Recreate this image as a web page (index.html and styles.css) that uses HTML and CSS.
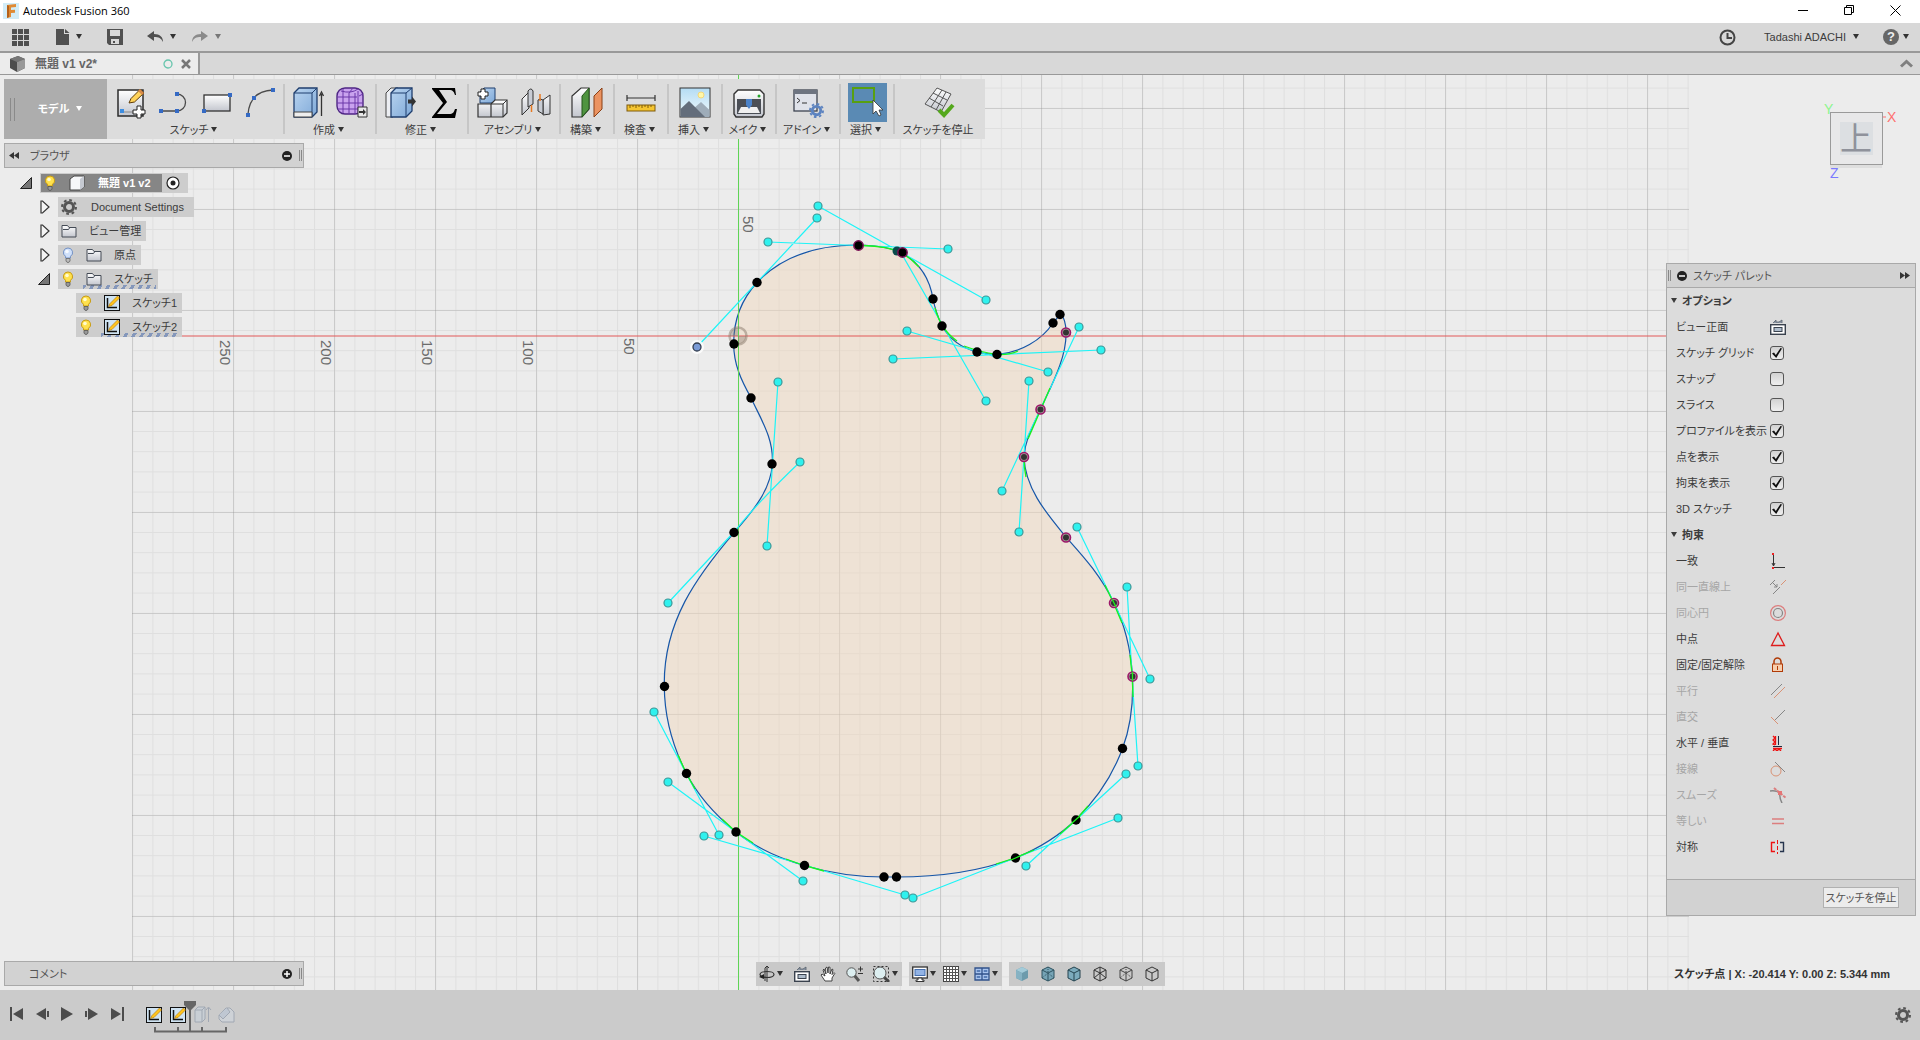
FILE: index.html
```html
<!DOCTYPE html>
<html lang="ja">
<head>
<meta charset="utf-8">
<title>Autodesk Fusion 360</title>
<link rel="stylesheet" href="styles.css">
</head>
<body>
<svg class="defs" width="0" height="0" aria-hidden="true">
  <defs>
    <linearGradient id="gl" x1="0" y1="0" x2="0" y2="1"><stop offset="0" stop-color="#fff"/><stop offset="1" stop-color="#c3c6ce"/></linearGradient>
    <linearGradient id="gb" x1="0" y1="0" x2="1" y2="1"><stop offset="0" stop-color="#b9d4f0"/><stop offset="1" stop-color="#7fa9d8"/></linearGradient>
    <linearGradient id="sky" x1="0" y1="0" x2="0" y2="1"><stop offset="0" stop-color="#b4dcf4"/><stop offset="1" stop-color="#f2fafd"/></linearGradient>
    <symbol id="caret" viewBox="0 0 8 6"><path d="M1 0h6L4 5z" fill="currentColor"/></symbol>
    <symbol id="bulb-on" viewBox="0 0 12 16"><path d="M6 1a4.500 4.500 0 0 0-2.500 8.300V11h5V9.300A4.500 4.500 0 0 0 6 1z" fill="#ffe14d" stroke="#c79a13"/><circle cx="5" cy="4.500" r="1.800" fill="#fffbd0"/><path d="M4 11.500h4V14l-1 1.300H5L4 14z" fill="#999" stroke="#555" stroke-width=".8"/></symbol>
    <symbol id="bulb-off" viewBox="0 0 12 16"><path d="M6 1a4.500 4.500 0 0 0-2.500 8.300V11h5V9.300A4.500 4.500 0 0 0 6 1z" fill="#cfe0fa" stroke="#7391c4"/><circle cx="5" cy="4.500" r="1.800" fill="#f5f9ff"/><path d="M4 11.500h4V14l-1 1.300H5L4 14z" fill="#bbb" stroke="#666" stroke-width=".8"/></symbol>
    <symbol id="folder" viewBox="0 0 16 14"><path d="M1 13V1.500h5.500L8 3.500h7V13z" fill="url(#gl)" stroke="#444b55"/><path d="M2 5.500h5.500l1-1.500" fill="none" stroke="#444b55"/></symbol>
    <symbol id="sketch" viewBox="0 0 16 16"><rect x=".5" y=".5" width="15" height="15" fill="#cfe3f2" stroke="#111"/><path d="M3.500 3v9.500H13" fill="none" stroke="#111" stroke-width="1.500"/><path d="M4.500 11.500L6 8.500 13.500 1l2 2L8 10.500z" fill="#ffc41d" stroke="#b0740a" stroke-width=".6"/></symbol>
    <symbol id="closed" viewBox="0 0 10 14"><path d="M1 1h1.500L9 7l-6.500 6H1z" fill="#f4f4f4" stroke="#333" stroke-width="1.200"/></symbol>
    <symbol id="open" viewBox="0 0 12 12"><path d="M11.500.5v11H.5z" fill="#777" stroke="#222"/></symbol>
    <symbol id="gear" viewBox="0 0 16 16"><circle cx="8" cy="8" r="4.500" fill="none" stroke="currentColor" stroke-width="3"/><circle cx="8" cy="8" r="7" fill="none" stroke="currentColor" stroke-width="2" stroke-dasharray="2.750 2.750"/></symbol>
    <symbol id="front" viewBox="0 0 16 16"><rect x=".7" y="5.700" width="14.600" height="9.600" fill="#fff" stroke="#3a424e" stroke-width="1.400"/><rect x="4" y="8.500" width="8" height="4" fill="#aebccb" stroke="#3a424e"/><path d="M3 4l3-3v2h3l3-2v3" fill="#8b95a3" stroke="#59636f" stroke-width=".8"/></symbol>
    <symbol id="cube-box" viewBox="0 0 14 16"><path d="M7 1l6 3v8l-6 3-6-3V4z"/><path d="M1 4l6 3 6-3M7 7v8" fill="none"/></symbol>
    <pattern id="minor" x="31.200" y="12.600" width="20.200" height="20.200" patternUnits="userSpaceOnUse"><path d="M.5 0v20.200M0 .5h20.200" stroke="#000" stroke-opacity=".055"/></pattern>
    <pattern id="major" x="31" y="33" width="101" height="101" patternUnits="userSpaceOnUse"><path d="M.5 0v101M0 .5h101" stroke="#000" stroke-opacity=".1"/></pattern>
  </defs>
</svg>

<header class="titlebar">
  <svg width="16" height="16" viewBox="0 0 16 16"><rect width="16" height="16" fill="#d2ecf7"/><path d="M4 2l9-1v3l-5 .5V7l4-.3v3l-4 .3v4l-4 1z" fill="#e08a34"/><path d="M4 2l2 1v11l-2 1z" fill="#b5611a"/></svg>
  <h1>Autodesk Fusion 360</h1>
  <div class="window-controls">
    <button aria-label="最小化"><svg width="11" height="11"><path d="M0 5.500h10" stroke="#000"/></svg></button>
    <button aria-label="元に戻す"><svg width="11" height="11"><path d="M.5 2.500h7v7h-7zM2.500 2.500v-2h7v7h-2" fill="none" stroke="#000"/></svg></button>
    <button aria-label="閉じる"><svg width="11" height="11"><path d="M.5.5l10 10M10.500.5l-10 10" stroke="#000"/></svg></button>
  </div>
</header>

<div class="quickbar">
  <button class="q-grid" aria-label="データパネル"><svg width="17" height="17"><path d="M0 0h5v5H0zM6 0h5v5H6zM12 0h5v5h-5zM0 6h5v5H0zM6 6h5v5H6zM12 6h5v5h-5zM0 12h5v5H0zM6 12h5v5H6zM12 12h5v5h-5z" fill="#505050"/></svg></button>
  <button class="q-file" aria-label="ファイル"><svg width="14" height="16"><path d="M0 0h8v5h5v11H0z" fill="#505050"/><path d="M9 0l4.500 4H9z" fill="#505050"/></svg><svg class="caret" width="8" height="6"><use href="#caret"/></svg></button>
  <button class="q-save" aria-label="保存"><svg width="17" height="17"><path d="M0 0h16v16H2l-2-2z" fill="#505050"/><path d="M3 1h10v6H3zM4 10h8v5H4z" fill="#d8d8d8"/><path d="M6 12h2v2H6z" fill="#505050"/></svg></button>
  <button class="q-undo" aria-label="元に戻す"><svg width="17" height="12"><path d="M0 5l7-5v3c6 0 9 3 9 8-2-4-4-5-9-5v4z" fill="#505050"/></svg><svg class="caret" width="8" height="6"><use href="#caret"/></svg></button>
  <button class="q-redo" aria-label="やり直し"><svg width="17" height="12"><path d="M16 5L9 0v3C3 3 0 6 0 11c2-4 4-5 9-5v4z" fill="#8a8a8a"/></svg><svg class="caret" width="8" height="6"><use href="#caret"/></svg></button>
  <div class="account">
    <button aria-label="ジョブステータス"><svg width="17" height="17"><circle cx="8.500" cy="8.500" r="7" fill="none" stroke="#444" stroke-width="2"/><path d="M8.500 4v5H13" fill="none" stroke="#444" stroke-width="2"/></svg></button>
    <button class="user">Tadashi ADACHI<svg class="caret" width="8" height="6"><use href="#caret"/></svg></button>
    <button class="help" aria-label="ヘルプ"><span class="help-mark">?</span><svg class="caret" width="8" height="6"><use href="#caret"/></svg></button>
  </div>
</div>

<div class="tabs">
  <div class="tab">
    <svg width="18" height="18"><path d="M1 4l8-3 7 3v9l-8 4-7-4z" fill="#4d4d4d"/><path d="M1 4l8-3 7 3-8 3z" fill="#777"/><path d="M8 7l8-3v9l-8 4z" fill="#999"/></svg>
    <span class="tab-name">無題 v1 v2*</span>
    <svg width="10" height="10"><circle cx="5" cy="5" r="4" fill="none" stroke="#67c5ad" stroke-width="1.300"/></svg>
    <button aria-label="タブを閉じる"><svg width="10" height="10"><path d="M1 1l8 8M9 1L1 9" stroke="#777" stroke-width="2.500"/></svg></button>
  </div>
  <button class="collapse" aria-label="折りたたむ"><svg width="13" height="9"><path d="M1 7.500l5.500-5 5.500 5" fill="none" stroke="#808080" stroke-width="3"/></svg></button>
</div>

<main class="stage">
  <svg class="scene" aria-label="スケッチ">
    <rect x="132" y="0" width="1557" height="100%" fill="url(#minor)"/>
    <rect x="132" y="0" width="1557" height="100%" fill="url(#major)"/>
    <g transform="translate(0 -75)">
      <path class="profile" d="M858 245C874 245.500 890 247 902 253C920 263 930 280 933 299C935 309 938 317 942 326C950 340 962 348 977 352C983 353.500 990 354.500 997 354.500C1020 353 1042 340 1053 323L1060 314.500C1064 316 1066 324 1066 332C1067 358 1050 388 1040.700 409C1032 428 1025 440 1024 457C1025 489 1048 515 1066 537C1082 555 1100 574 1114 603C1126 627 1131 652 1132.500 676.500C1133.500 702 1131 726 1122.500 748.500C1112 777 1097 799 1075.700 819.700C1058 837 1037 849 1015.400 858C978 872 937 877 896.400 877H884C857 877 830 873 804.300 865.500C778 858 756 848 735.700 831.700C714 814 698 796 686.400 773.300C672 745 664.500 716 664.300 686.700C663 622 697 576 734.300 532.300C754 510 771 489 772.300 464C774 438 760 418 751 397.700C741 380 733.700 364 733.700 344C733.500 321 741 300 757 282.500C782 256 818 245 858 245Z"/>
      <path class="axis-x" d="M132 336H1689"/>
      <path class="axis-y" d="M738.500 75V3000"/>
      <g fill="none" stroke="#8a7a6c" stroke-opacity=".5"><circle cx="738" cy="336" r="8.500" stroke-width="2.500"/><path d="M738 336h-8a8 8 0 0 1 8-8zM738 336h8a8 8 0 0 1-8 8z" fill="#8a7a6c" fill-opacity=".4" stroke="none"/></g>
      <path class="handle" d="M818 206L986 300M817 218L697 347M768 242L948 249M900 251L986 401M907 331L1048 372M893 359L1101 350M778 382L767 546M800 462Q758 502 734 532L668 603M1029 381L1019 532M1079 327L1002 491M1077 527L1114 603L1150 679M1127 587L1132 676L1138 766M1126 774L1026 866M1118 818L1015 858L913 898M905 895L804 865L704 836M668 782L736 832L803 881M654 712L686 773L719 835"/>
      <path class="curvature" d="M863 245.500Q888 246 902 253Q912 259 919 267M935 308Q941 330 957 341M964 346Q980 352 997 354.500Q1010 355 1018 351M1050 388L1041 409L1028 439M1024 457Q1024 468 1026 477M1105 585Q1114 603 1122 623M1130 655Q1133 676 1133 697M1088 806L1076 820L1060 834M1034 850L1015 858L996 864M824 871L804 865.500L786 859M753 843L736 832L722 819M695 789L686 773L678 755"/>
      <g class="grip"><circle cx="818" cy="206" r="4"/><circle cx="817" cy="218" r="4"/><circle cx="768" cy="242" r="4"/><circle cx="948" cy="249" r="4"/><circle cx="986" cy="300" r="4"/><circle cx="986" cy="401" r="4"/><circle cx="907" cy="331" r="4"/><circle cx="1048" cy="372" r="4"/><circle cx="893" cy="359" r="4"/><circle cx="1101" cy="350" r="4"/><circle cx="778" cy="382" r="4"/><circle cx="767" cy="546" r="4"/><circle cx="800" cy="462" r="4"/><circle cx="668" cy="603" r="4"/><circle cx="1029" cy="381" r="4"/><circle cx="1019" cy="532" r="4"/><circle cx="1079" cy="327" r="4"/><circle cx="1002" cy="491" r="4"/><circle cx="1077" cy="527" r="4"/><circle cx="1150" cy="679" r="4"/><circle cx="1127" cy="587" r="4"/><circle cx="1138" cy="766" r="4"/><circle cx="1126" cy="774" r="4"/><circle cx="1026" cy="866" r="4"/><circle cx="1118" cy="818" r="4"/><circle cx="913" cy="898" r="4"/><circle cx="905" cy="895" r="4"/><circle cx="704" cy="836" r="4"/><circle cx="668" cy="782" r="4"/><circle cx="803" cy="881" r="4"/><circle cx="654" cy="712" r="4"/><circle cx="719" cy="835" r="4"/></g>
      <circle cx="697" cy="347" r="7" fill="#fff" fill-opacity=".8"/><circle cx="697" cy="347" r="4" fill="#7b9bd6" stroke="#333e50" stroke-width="1.300"/>
      <circle cx="897" cy="251" r="4.500" fill="#0a4a4c"/>
      <g fill="#000"><circle cx="757" cy="282.500" r="4.700"/><circle cx="734" cy="344" r="4.700"/><circle cx="751" cy="398" r="4.700"/><circle cx="772" cy="464" r="4.700"/><circle cx="734" cy="532.500" r="4.700"/><circle cx="933" cy="299" r="4.700"/><circle cx="942" cy="326" r="4.700"/><circle cx="977" cy="352" r="4.700"/><circle cx="997" cy="354.500" r="4.700"/><circle cx="1053" cy="323" r="4.700"/><circle cx="1060" cy="314.500" r="4.700"/><circle cx="1122.500" cy="748.500" r="4.700"/><circle cx="1076" cy="820" r="4.700"/><circle cx="1015.500" cy="858" r="4.700"/><circle cx="896.500" cy="877" r="4.700"/><circle cx="884" cy="877" r="4.700"/><circle cx="804.500" cy="865.500" r="4.700"/><circle cx="736" cy="832" r="4.700"/><circle cx="686.500" cy="773.500" r="4.700"/><circle cx="664.500" cy="686.500" r="4.700"/></g>
      <g fill="#000" stroke="#7d1457" stroke-width="1.500"><circle cx="858.500" cy="245.500" r="4.700"/><circle cx="902.500" cy="252.500" r="4.700"/></g>
      <g class="ring"><circle cx="1066" cy="332.500" r="4.500"/><circle cx="1040.500" cy="409.500" r="4.500"/><circle cx="1024" cy="457" r="4.500"/><circle cx="1066" cy="537.500" r="4.500"/><circle cx="1114" cy="603" r="4.500"/><circle cx="1132.500" cy="676.500" r="4.500"/></g>
      <g fill="#333"><circle cx="1066" cy="332.500" r="3"/><circle cx="1040.500" cy="409.500" r="3"/><circle cx="1024" cy="457" r="3"/><circle cx="1066" cy="537.500" r="3"/><circle cx="1114" cy="603" r="3"/><circle cx="1132.500" cy="676.500" r="3"/></g>
      <path class="curvature" d="M1112 599L1116 607M1132.500 672V681M1072 823L1080 816M1011 860L1020 856"/>
      <g class="ruler"><text transform="translate(220 340) rotate(90)">250</text><text transform="translate(321 340) rotate(90)">200</text><text transform="translate(422 340) rotate(90)">150</text><text transform="translate(523 340) rotate(90)">100</text><text transform="translate(624 338) rotate(90)">50</text><text transform="translate(743 216) rotate(90)">50</text></g>
    </g>
  </svg>

  <div class="upper">
    <div class="left-dock">
      <nav class="toolbar">
        <button class="mode"><span class="grip-bars"></span><span>モデル</span><svg class="caret" width="8" height="6"><use href="#caret"/></svg></button>
        <section class="group g-sketch">
          <div class="icons">
            <svg width="32" height="32"><rect x="3" y="3" width="25" height="26" fill="url(#gl)" stroke="#2b2b2b" stroke-width="1.500"/><path d="M6 25h14" stroke="#888"/><rect x="5" y="22" width="4" height="4" fill="#3d8de0"/><path d="M14 16l2-4.500 9-9 4 3.500-9.500 9z" fill="#ffd35a" stroke="#5c3a0a"/><path d="M23 4l2-2 4 4-2 2z" fill="#d88a4a"/><path d="M22 19h4v4h4v4h-4v4h-4v-4h-4v-4h4z" fill="#fff" stroke="#222"/></svg>
            <svg width="32" height="32"><path d="M3 24h16a8.500 8.500 0 0 0 0-17" fill="none" stroke="#4a4a4a" stroke-width="1.300"/><path d="M1 22h4v4H1zM17 22h4v4h-4zM17 5h4v4h-4z" fill="#356ac4"/></svg>
            <svg width="32" height="32"><rect x="3" y="8" width="26" height="16" fill="url(#gl)" stroke="#333" stroke-width="1.300"/><path d="M1 22h4v4H1zM27 6h4v4h-4z" fill="#356ac4"/></svg>
            <svg width="32" height="32"><path d="M4 27Q6 4 29 3" fill="none" stroke="#4a4a4a" stroke-width="1.300"/><path d="M2 26h4v4H2zM8 9h4v4H8zM27 1h4v4h-4z" fill="#356ac4"/></svg>
          </div>
          <button>スケッチ<svg class="caret" width="8" height="6"><use href="#caret"/></svg></button>
        </section>
        <section class="group">
          <div class="icons">
            <svg width="32" height="32"><path d="M1 6l5-5h18v24l-5 5H1z" fill="url(#gb)" stroke="#1f3e6e" stroke-width="1.300"/><path d="M1 6h18v24M19 6l5-5" fill="none" stroke="#1f3e6e"/><path d="M1 25h18v5H1z" fill="#eee" stroke="#444"/><path d="M28.500 29V7M26.500 9l2-4 2 4" fill="none" stroke="#333" stroke-width="1.300"/></svg>
            <svg width="32" height="32"><rect x="1" y="1" width="26" height="26" rx="8" fill="#c9a2ee" stroke="#4d2583" stroke-width="1.400"/><path d="M7 2v24M13 6v21M19 6v21M1 10h20M1 16h26M2 22h24M5 4q10 3 17-2M22 4v22M13 6l4-5M23 9l4-2" fill="none" stroke="#6a37a8"/><path d="M22 20h9v10h-9z" fill="#e8e8e8" stroke="#333"/><path d="M23 24h4v-2l3 3-3 3v-2h-4z" fill="#333"/></svg>
          </div>
          <button>作成<svg class="caret" width="8" height="6"><use href="#caret"/></svg></button>
        </section>
        <section class="group">
          <div class="icons">
            <svg width="32" height="32"><path d="M1 6l5-5h7v24l-5 5H1z" fill="#eceef2" stroke="#444"/><path d="M6 6l5-5h16v23l-6 6H6z" fill="url(#gb)" stroke="#1f3e6e" stroke-width="1.300"/><path d="M6 6h15v24M21 6l6-5" fill="none" stroke="#1f3e6e"/><path d="M23 12.500h4v-3l4 5-4 5v-3h-4z" fill="#333"/></svg>
            <svg width="32" height="32"><path d="M4 1h23l1 7h-1c-1-3-2-5-6-5H11l8 12-10 12h12c4 0 5-2 6-5h2l-2 9H4v-1l11-14L4 2z" fill="#000"/></svg>
          </div>
          <button>修正<svg class="caret" width="8" height="6"><use href="#caret"/></svg></button>
        </section>
        <section class="group">
          <div class="icons">
            <svg width="32" height="32"><path d="M3 5l4-4h11v15H3z" fill="url(#gb)" stroke="#1f3e6e"/><path d="M1 17h13v13H1zM14 17l4-4h12v13l-4 4H14z" fill="url(#gl)" stroke="#333" stroke-width="1.200"/><path d="M14 17h12v13M26 17l4-4" fill="none" stroke="#333"/><path d="M4 2h4v3h3v4H8v3H4V9H1V5h3z" fill="#fff" stroke="#222"/></svg>
            <svg width="32" height="32"><path d="M2 12l7-7V21l-7 7zM30 8l-7 5v15l7-1z" fill="url(#gl)" stroke="#333"/><path d="M8 4q3-4 5 0v13l-5 3zM18 13q2-2 5 0v14l-5-3z" fill="#c8ccd4" stroke="#333"/><path d="M11.500 18v7M20 7v7" stroke="#e77820" stroke-width="1.500"/></svg>
          </div>
          <button>アセンブリ<svg class="caret" width="8" height="6"><use href="#caret"/></svg></button>
        </section>
        <section class="group">
          <div class="icons"><svg width="32" height="32"><path d="M1 9l9-8h8v21l-7 8H1z" fill="url(#gl)" stroke="#333" stroke-width="1.200"/><path d="M11 9l7-8v21l-7 8z" fill="#4f9440" stroke="#24551b"/><path d="M23 9l8-8v21l-8 8z" fill="#eb9361" stroke="#8a3f15"/></svg></div>
          <button>構築<svg class="caret" width="8" height="6"><use href="#caret"/></svg></button>
        </section>
        <section class="group">
          <div class="icons"><svg width="32" height="32"><path d="M2 11h28M2 8v6M30 8v6" stroke="#333" stroke-width="1.200"/><rect x="2" y="18" width="28" height="6" fill="#f5c531" stroke="#7e5a0a"/><path d="M5 18v3M8 18v2M11 18v3M14 18v2M17 18v3M20 18v2M23 18v3M26 18v2" stroke="#7e5a0a"/></svg></div>
          <button>検査<svg class="caret" width="8" height="6"><use href="#caret"/></svg></button>
        </section>
        <section class="group">
          <div class="icons"><svg width="32" height="32"><rect x="1" y="1" width="30" height="29" fill="url(#sky)" stroke="#333"/><circle cx="22" cy="8" r="3" fill="#fff7a8" stroke="#f4d77a"/><path d="M14 22l8-7 8.500 8v7H14z" fill="#9eacb9"/><path d="M1.500 22L10 14l16 16H1.500z" fill="#636d7b"/></svg></div>
          <button>挿入<svg class="caret" width="8" height="6"><use href="#caret"/></svg></button>
        </section>
        <section class="group">
          <div class="icons"><svg width="32" height="32"><path d="M1 7l4-4h22l4 4v20l-2 3H3l-2-3z" fill="url(#gl)" stroke="#333" stroke-width="1.400"/><path d="M4 12h24v15H4z" fill="#4b4f56"/><path d="M8 20h16l3 6H5z" fill="#f0f0f0"/><path d="M13 12h6v6l-3 4-3-4z" fill="#4c83c9"/><circle cx="26" cy="9" r="1.500" fill="#25a52b"/></svg></div>
          <button>メイク<svg class="caret" width="8" height="6"><use href="#caret"/></svg></button>
        </section>
        <section class="group g-addin">
          <div class="icons"><svg width="32" height="32"><rect x="2" y="3" width="23" height="21" fill="#dfe2ea" stroke="#3e4450" stroke-width="1.300"/><path d="M2 3h23v4H2z" fill="#6d7481"/><path d="M5 11l3 2.500L5 16M10 16h5" fill="none" stroke="#333"/><g transform="translate(17 16)" color="#5c83c0"><use href="#gear" width="15" height="15"/></g></svg></div>
          <button>アドイン<svg class="caret" width="8" height="6"><use href="#caret"/></svg></button>
        </section>
        <section class="group g-select">
          <div class="icons"><svg width="39" height="39" viewBox="0 0 39 39"><rect x="5" y="5" width="21" height="14" fill="none" stroke="#58a010" stroke-width="2"/><path d="M25 17v14l3-3 3 5 2-1-2-5h4z" fill="#fff" stroke="#333" stroke-width=".8"/></svg></div>
          <button>選択<svg class="caret" width="8" height="6"><use href="#caret"/></svg></button>
        </section>
        <section class="group g-stop">
          <div class="icons"><svg width="32" height="32"><path d="M14 1l14 6-10 18-16-8z" fill="url(#gl)" stroke="#555"/><path d="M10 6l14 7M6 11l14 8M19 3L8 20M23 5L13 23" stroke="#555" fill="none"/><path d="M16 23l5 5L30 18" fill="none" stroke="#54a81c" stroke-width="4"/></svg></div>
          <button>スケッチを停止</button>
        </section>
      </nav>

      <div class="bar">
        <svg width="11" height="7"><path d="M5 0v7L0 3.500zM10 0v7L5 3.500z" fill="#333"/></svg>
        <span>ブラウザ</span>
        <svg class="bar-sign" width="10" height="10"><circle cx="5" cy="5" r="5" fill="#222"/><path d="M2 5h6" stroke="#fff" stroke-width="1.500"/></svg>
        <i class="bars"></i>
      </div>
      <ul class="tree">
        <li class="lv0"><svg width="12" height="12"><use href="#open"/></svg>
          <div class="node root"><span class="active"><svg width="12" height="16"><use href="#bulb-on"/></svg><svg width="16" height="16"><path d="M1 4l4-3h10v11l-4 3H1z" fill="#f6f7f9" stroke="#444"/><path d="M11 4v11l4-3V1z" fill="#c5c9d1"/></svg><b>無題 v1 v2</b></span><svg width="14" height="14"><circle cx="7" cy="7" r="6" fill="#fff" stroke="#222" stroke-width="1.200"/><circle cx="7" cy="7" r="2.500" fill="#222"/></svg></div></li>
        <li class="lv1"><svg width="10" height="14"><use href="#closed"/></svg>
          <div class="node doc"><svg color="#555" width="16" height="16"><use href="#gear"/></svg><span>Document Settings</span></div></li>
        <li class="lv1"><svg width="10" height="14"><use href="#closed"/></svg>
          <div class="node"><svg width="16" height="14"><use href="#folder"/></svg><span>ビュー管理</span></div></li>
        <li class="lv1"><svg width="10" height="14"><use href="#closed"/></svg>
          <div class="node lamp"><svg width="12" height="16"><use href="#bulb-off"/></svg><svg width="16" height="14"><use href="#folder"/></svg><span>原点</span></div></li>
        <li class="lv1"><svg width="12" height="12"><use href="#open"/></svg>
          <div class="node lamp hatch"><svg width="12" height="16"><use href="#bulb-on"/></svg><svg width="16" height="14"><use href="#folder"/></svg><span>スケッチ</span></div></li>
        <li class="lv2"><div class="node lamp"><svg width="12" height="16"><use href="#bulb-on"/></svg><svg width="16" height="16"><use href="#sketch"/></svg><span>スケッチ1</span></div></li>
        <li class="lv2"><div class="node lamp hatch"><svg width="12" height="16"><use href="#bulb-on"/></svg><svg width="16" height="16"><use href="#sketch"/></svg><span>スケッチ2</span></div></li>
      </ul>
    </div>

    <div class="right-dock">
      <svg class="viewcube" width="90" height="85">
        <rect x="14" y="16" width="52" height="52" fill="#000" opacity=".06"/>
        <rect x="14.500" y="12.500" width="52" height="52" fill="#e8e8e9" stroke="#9a9a9a"/>
        <rect x="24" y="22" width="33" height="33" fill="#dcdfe2"/>
        <text class="cube-face" x="40" y="50">上</text>
        <text x="8" y="14" fill="#8df58d">Y</text><text x="71" y="22" fill="#ff7070">X</text><text x="14" y="78" fill="#7a7aff">Z</text>
        <path d="M67 17h3" stroke="#ff7070"/>
      </svg>

      <aside class="palette">
        <header><i class="bars"></i><svg width="10" height="10"><circle cx="5" cy="5" r="5" fill="#222"/><path d="M2 5h6" stroke="#fff" stroke-width="1.500"/></svg><span>スケッチ パレット</span><svg class="end" width="11" height="7"><path d="M0 0v7l5-3.500zM5 0v7l5-3.500z" fill="#333"/></svg></header>
        <div class="palette-body">
          <h2><svg width="8" height="6"><use href="#caret"/></svg>オプション</h2>
          <div class="row"><span>ビュー正面</span><svg width="16" height="16"><use href="#front"/></svg></div>
          <label class="row"><span>スケッチ グリッド</span><input type="checkbox" checked></label>
          <label class="row"><span>スナップ</span><input type="checkbox"></label>
          <label class="row"><span>スライス</span><input type="checkbox"></label>
          <label class="row"><span>プロファイルを表示</span><input type="checkbox" checked></label>
          <label class="row"><span>点を表示</span><input type="checkbox" checked></label>
          <label class="row"><span>拘束を表示</span><input type="checkbox" checked></label>
          <label class="row"><span>3D スケッチ</span><input type="checkbox" checked></label>
          <h2><svg width="8" height="6"><use href="#caret"/></svg>拘束</h2>
          <div class="row"><span>一致</span><svg width="16" height="16"><path d="M3.500 2v11M4 14.500h11M2 10l1.500 3L5 10" fill="none" stroke="#333"/><path d="M2 0h2v2H2zM2 14h2v2H2z" fill="#e22"/></svg></div>
          <div class="row off"><span>同一直線上</span><svg width="16" height="16"><path d="M0 6l5-5M3 15L10 8M3 4l4 4M7 5v3H4" fill="none" stroke="#333"/><path d="M11 6l5-5" stroke="#d84a10"/></svg></div>
          <div class="row off"><span>同心円</span><svg width="16" height="16"><circle cx="8" cy="8" r="7.400" fill="none" stroke="#d22" stroke-width="1.200"/><circle cx="8" cy="8" r="4.500" fill="none" stroke="#333" stroke-width="1.200"/></svg></div>
          <div class="row"><span>中点</span><svg width="16" height="16"><path d="M8 2L1.500 14.500h13z" fill="none" stroke="#dd1c1c" stroke-width="1.300"/></svg></div>
          <div class="row"><span>固定/固定解除</span><svg width="16" height="16"><path d="M4 7V4.500a3.500 3.500 0 0 1 7 0V7" fill="none" stroke="#b03a06" stroke-width="1.500"/><rect x="2.500" y="7" width="10" height="7.500" fill="#f8cfae" stroke="#b03a06"/><path d="M7.500 9v4" stroke="#b03a06"/></svg></div>
          <div class="row off"><span>平行</span><svg width="16" height="16"><path d="M1 12L12 1" stroke="#333"/><path d="M4 15L15 4" stroke="#d84a10"/></svg></div>
          <div class="row off"><span>直交</span><svg width="16" height="16"><path d="M5 11L15 1" stroke="#333"/><path d="M1 8l7 7" stroke="#d84a10"/></svg></div>
          <div class="row"><span>水平 / 垂直</span><svg width="16" height="16"><path d="M8.500 1v9M3 11.500h9" stroke="#1e2b42"/><path d="M5.500 1v9M3 1l2 2-2 2 2 2-2 2 2 1M3 13.500h9M3 16l2-2 2 2 2-2 2 2" fill="none" stroke="#e11" stroke-width="1.300"/></svg></div>
          <div class="row off"><span>接線</span><svg width="16" height="16"><circle cx="6" cy="10" r="5" fill="none" stroke="#d84a10"/><path d="M5 1l10 10" stroke="#333"/></svg></div>
          <div class="row off"><span>スムーズ</span><svg width="16" height="16"><path d="M0 4q6-1 10 2-1 4 2 10" fill="none" stroke="#333" stroke-width="1.500"/><path d="M4 1l12 10" stroke="#d22" stroke-width="2" stroke-dasharray="3 1"/><rect x="8" y="4" width="4" height="4" fill="#e11"/></svg></div>
          <div class="row off"><span>等しい</span><svg width="16" height="16"><path d="M2 6h12M2 10.500h12" stroke="#d22" stroke-width="1.300"/></svg></div>
          <div class="row"><span>対称</span><svg width="16" height="16"><path d="M5 3.500H1.500v9H5" fill="none" stroke="#e11" stroke-width="1.400"/><path d="M10 3.500h3.500v9H10" fill="none" stroke="#26344d" stroke-width="1.400"/><path d="M7.500 1v14" stroke="#e11" stroke-dasharray="4 2"/></svg></div>
        </div>
        <footer><button>スケッチを停止</button></footer>
      </aside>
    </div>
  </div>

  <div class="lower">
    <div class="bar comments"><span>コメント</span>
      <svg class="bar-sign" width="10" height="10"><circle cx="5" cy="5" r="5" fill="#222"/><path d="M2 5h6M5 2v6" stroke="#fff" stroke-width="1.500"/></svg><i class="bars"></i></div>
    <div class="navtools">
      <div class="navset nav-a">
        <button aria-label="オービット"><svg width="16" height="16"><path d="M8 0v16M6 15V2l2-2 2 2" fill="none" stroke="#333"/><ellipse cx="8" cy="8.500" rx="7" ry="3" fill="none" stroke="#333" stroke-width="1.200"/><path d="M0 11l5-3v5z" fill="#222"/></svg><svg class="caret" width="8" height="6"><use href="#caret"/></svg></button>
        <button aria-label="ビュー正面"><svg width="16" height="16"><use href="#front"/></svg></button>
        <button aria-label="画面移動"><svg width="16" height="16"><path d="M5 15L1 9l1-1 3 2-2-6 1-1 2 5-.500-6L7 1l1 6 .500-6 1.500.2V8l2-5 1 .6-1 5 2-2 .8.800L12 12v3z" fill="#fff" stroke="#333" stroke-width=".9"/></svg></button>
        <button aria-label="ズーム"><svg width="17" height="16"><path d="M8 9l5 6" stroke="#555" stroke-width="3"/><circle cx="5.500" cy="6.500" r="4.700" fill="#dceef0" stroke="#555"/><path d="M12 3h5M14.500.5v5M12 7.500h5" stroke="#333"/></svg></button>
        <button aria-label="ズームウィンドウ"><svg width="17" height="16"><path d="M.5.5h15v15H.5z" fill="none" stroke="#333" stroke-dasharray="2 2"/><path d="M10 10l6 6" stroke="#444" stroke-width="3"/><circle cx="7" cy="7" r="6" fill="#dceef0" stroke="#555"/></svg><svg class="caret" width="8" height="6"><use href="#caret"/></svg></button>
      </div>
      <div class="navset nav-b">
        <button aria-label="表示設定"><svg width="16" height="16"><rect x=".7" y="1" width="14.600" height="11" fill="#fff" stroke="#333" stroke-width="1.300"/><rect x="3" y="3.500" width="10" height="6" fill="#92b3e5" stroke="#456fae"/><path d="M6 12h4v2h2v1.500H4V14h2z" fill="#fff" stroke="#333"/></svg><svg class="caret" width="8" height="6"><use href="#caret"/></svg></button>
        <button aria-label="グリッド"><svg width="16" height="16"><rect x=".5" y=".5" width="15" height="15" fill="#fff" stroke="#444"/><path d="M3.500 0v16M6.500 0v16M9.500 0v16M12.500 0v16M0 3.500h16M0 6.500h16M0 9.500h16M0 12.500h16" stroke="#555"/></svg><svg class="caret" width="8" height="6"><use href="#caret"/></svg></button>
        <button aria-label="ビューポート"><svg width="16" height="16"><path d="M1 2h14v12H1zM8 2v12M1 8h14" fill="#a9c4ee" stroke="#31528a" stroke-width="1.300"/><path d="M3 4.500h3v1H3zM10 4.500h3v1h-3zM3 10.500h3v1H3zM10 10.500h3v1h-3z" fill="#fff" stroke="#5a7fb9"/></svg><svg class="caret" width="8" height="6"><use href="#caret"/></svg></button>
      </div>
      <div class="navset nav-c">
        <button aria-label="シェーディング"><svg width="14" height="16"><path d="M7 1l6 3v8l-6 3-6-3V4z" fill="#6d9bac"/><path d="M7 1l6 3-6 3-6-3z" fill="#a3cbd9"/><path d="M1 4l6 3v8l-6-3z" fill="#86b2c3"/></svg></button>
        <button aria-label="隠線付きシェーディング"><svg width="14" height="16" fill="#76a4b6" stroke="#2e5360"><use href="#cube-box"/><path d="M7 1v6M1 12l6-5 6 5" fill="none" stroke-dasharray="1 1"/></svg></button>
        <button aria-label="エッジ付きシェーディング"><svg width="14" height="16" fill="#7cabbd" stroke="#24434f"><use href="#cube-box"/></svg></button>
        <button aria-label="ワイヤフレーム"><svg width="14" height="16" fill="none" stroke="#333"><use href="#cube-box"/><path d="M7 1v6M1 12l6-5 6 5"/></svg></button>
        <button aria-label="隠線付きワイヤフレーム"><svg width="14" height="16" fill="none" stroke="#444"><use href="#cube-box"/><path d="M7 1v6M1 12l6-5 6 5" stroke-dasharray="1 1"/></svg></button>
        <button aria-label="表示エッジのみ"><svg width="14" height="16" fill="none" stroke="#333"><use href="#cube-box"/></svg></button>
      </div>
    </div>
    <p class="status">スケッチ点 | X: -20.414 Y: 0.00 Z: 5.344 mm</p>
  </div>
</main>

<footer class="timeline">
  <div class="transport">
    <button aria-label="最初へ"><svg width="14" height="14"><path d="M1 0v14" stroke="#4c4c4c" stroke-width="2"/><path d="M13 1v12L3 7z" fill="#4c4c4c"/></svg></button>
    <button aria-label="戻る"><svg width="14" height="14"><path d="M11 1v12L1 7z" fill="#4c4c4c"/><path d="M13 4v6" stroke="#4c4c4c" stroke-width="2"/></svg></button>
    <button aria-label="再生"><svg width="14" height="14"><path d="M1 0v14l12-7z" fill="#4c4c4c"/></svg></button>
    <button aria-label="進む"><svg width="14" height="14"><path d="M3 1v12l10-6z" fill="#4c4c4c"/><path d="M1 4v6" stroke="#4c4c4c" stroke-width="2"/></svg></button>
    <button aria-label="最後へ"><svg width="14" height="14"><path d="M13 0v14" stroke="#4c4c4c" stroke-width="2"/><path d="M1 1v12l10-6z" fill="#4c4c4c"/></svg></button>
  </div>
  <svg class="track" width="100" height="36">
    <use href="#sketch" x="6" y="7" width="16" height="16"/><use href="#sketch" x="30" y="7" width="16" height="16"/>
    <g opacity=".35"><path d="M55 10l3-3h7v12l-3 3h-7z" fill="#c8d8ea" stroke="#556a88"/><path d="M55 10h7v12M62 10l3-3M68.500 22V8M66 10l2.500-3 2.500 3" fill="none" stroke="#556a88"/><path d="M79 15l7-7h4l4 4v10H82l-3-3z" fill="#d5e0ee" stroke="#556a88"/><path d="M79 15l4 4 7-7-3-4" fill="#a9c0df" stroke="#556a88"/></g>
    <path d="M15 27v4.500h71V27M38 27v4M62 27v4" fill="none" stroke="#666" stroke-width="2"/>
    <path d="M44 1h12v4l-5 5v21h-2V10l-5-5z" fill="#666"/>
  </svg>
  <button class="settings" aria-label="設定"><svg color="#555" width="16" height="16"><use href="#gear"/></svg></button>
</footer>
</body>
</html>
```

FILE: styles.css
```css
* { box-sizing: border-box; }

body {
  margin: 0;
  min-height: 100vh;
  display: flex;
  flex-direction: column;
  background: #ececec;
  color: #3c3c3c;
  font: 11px/16px "Liberation Sans", "Noto Sans CJK JP", sans-serif;
  font-feature-settings: "palt";
}

.defs { position: absolute; }
svg { flex: none; display: block; }

button {
  display: flex;
  align-items: center;
  margin: 0;
  padding: 0;
  border: 0;
  background: none;
  color: inherit;
  font: inherit;
  white-space: nowrap;
}

.caret { color: #333; }

/* window title */
.titlebar {
  display: flex;
  align-items: center;
  height: 23px;
  padding: 0 19px 2px 3px;
  gap: 4px;
  background: #fff;
}
.titlebar h1 {
  margin: 0;
  color: #000;
  font: 11px/16px "Open Sans", sans-serif;
}
.window-controls { display: flex; gap: 35px; margin-left: auto; }

/* quick access bar */
.quickbar {
  display: flex;
  align-items: center;
  height: 30px;
  padding: 0 12px;
  border-bottom: 2px solid #999;
  background: #d8d8d8;
}
.quickbar button { gap: 5px; }
.q-file { margin-left: 27px; }
.q-save { margin-left: 24px; }
.q-undo { margin-left: 23px; }
.q-redo { margin-left: 15px; }
.q-redo .caret { color: #777; }
.account { display: flex; align-items: center; margin-left: auto; }
.account .user { gap: 6px; margin: 0 23px 0 28px; }
.help-mark {
  width: 16px;
  border-radius: 8px;
  background: #666;
  color: #eee;
  font-size: 13px;
  font-weight: bold;
  text-align: center;
}
.account .help { gap: 3px; margin-right: -2px; }

/* document tabs */
.tabs {
  display: flex;
  align-items: center;
  justify-content: space-between;
  height: 22px;
  padding-right: 7px;
  border-bottom: 1px solid #999;
  background: #d8d8d8;
}
.tab {
  display: flex;
  align-items: center;
  width: 200px;
  height: 21px;
  padding: 0 7px 0 9px;
  gap: 8px;
  border-right: 2px solid #999;
  background: #ececec;
}
.tab-name { flex: 1; color: #666; font-size: 12px; font-weight: bold; }

/* drawing area with docked panels above it */
.stage {
  position: relative;
  flex: 1;
  display: flex;
  flex-direction: column;
  padding: 4px;
}
.scene { position: absolute; inset: 0; width: 100%; height: 100%; }
.upper, .lower { position: relative; }
.upper { flex: 1; display: flex; justify-content: space-between; }

.profile { fill: rgba(240, 216, 190, .5); stroke: #1656a8; stroke-width: 1.2; }
.axis-x { stroke: rgba(226, 88, 88, .5); stroke-width: 2; }
.axis-y { stroke: #5fd455; }
.handle { fill: none; stroke: #1df4f7; stroke-width: 1.2; }
.curvature { fill: none; stroke: #1cf21c; stroke-width: 1.3; }
.grip { fill: #2ff1ee; stroke: #3d9696; stroke-width: 1.2; }
.ring { fill: #a9a09c; stroke: #9c1769; stroke-width: 1.6; }
.ruler { fill: #6c6c6c; font-size: 15px; }

.toolbar { display: flex; height: 60px; background: #dcdcdc; }
.mode {
  position: relative;
  width: 103px;
  justify-content: center;
  gap: 6px;
  padding-left: 10px;
  background: #adadad;
  color: #fff;
  font-weight: bold;
}
.mode .caret { color: #fff; }
.grip-bars {
  position: absolute;
  left: 6px;
  width: 5px;
  height: 23px;
  border: solid #8a8a8a;
  border-width: 0 1px;
}
.group {
  width: 92px;
  display: flex;
  flex-direction: column;
  align-items: center;
  justify-content: space-between;
  padding: 8px 2px 1px 0;
}
.group:not(:last-child) {
  background: linear-gradient(#c6c6c6, #c6c6c6) right center / 2px 50px no-repeat;
}
.group:nth-child(n+6) { width: 54px; }
.group.g-sketch { width: 178px; }
.group.g-addin { width: 64px; }
.group.g-stop { width: 90px; }
.icons { display: flex; gap: 11px; }
.g-select { padding-top: 4px; }
.g-select .icons { background: #5a8ab4; margin-bottom: -3px; }
.group button { gap: 2px; margin-right: 2px; }

/* panel headings */
.bar {
  display: flex;
  align-items: center;
  width: 300px;
  height: 25px;
  padding: 0 1px 0 4px;
  border: 1px solid #a9a9a9;
  background: #d2d2d2;
  color: #555;
}
.left-dock .bar { margin-top: 4px; gap: 10px; }
.bar.comments { padding-left: 24px; }
.bar .bar-sign { margin-left: auto; }
.comments .bars { margin-left: 7px; }
.left-dock .bars { margin-left: -3px; }
.bars { width: 3px; height: 11px; border: solid #888; border-width: 0 1px; }

/* model browser */
.tree { margin: 5px 0 0; padding: 0; list-style: none; }
.tree li { display: flex; align-items: center; height: 20px; margin-bottom: 4px; }
.lv0 { padding-left: 16px; gap: 8px; }
.lv1 { padding-left: 36px; gap: 8px; }
.lv1 > svg[width="12"] { margin-left: -2px; }
.lv2 { padding-left: 72px; }
.node {
  display: flex;
  align-items: center;
  height: 20px;
  padding: 0 5px 0 3px;
  gap: 12px;
  background: #cdcdcd;
}
.doc { padding-right: 10px; gap: 14px; }
.root { padding: 0 8px 0 1px; gap: 4px; }
.active {
  display: flex;
  align-items: center;
  height: 18px;
  padding: 0 11px 0 3px;
  gap: 13px;
  background: #868686;
  color: #fff;
}
.lamp { padding-left: 4px; }
.hatch {
  background-image: repeating-linear-gradient(120deg, #8497bb 0 3px, transparent 3px 7px);
  background-size: calc(100% - 27px) 4px;
  background-position: 25px 100%;
  background-repeat: no-repeat;
}

/* right side */
.right-dock { width: 250px; display: flex; flex-direction: column; align-items: flex-end; }
.viewcube { margin: 21px 10px 0 0; font-size: 14px; }
.cube-face { fill: #8f929b; font-size: 32px; text-anchor: middle; }

.palette {
  width: 100%;
  margin-top: 78px;
  border: 1px solid #a9a9a9;
  background: #dcdcdc;
}
.palette header {
  display: flex;
  align-items: center;
  height: 24px;
  padding: 0 4px 0 1px;
  gap: 6px;
  border-bottom: 1px solid #a9a9a9;
  background: #d2d2d2;
  color: #555;
}
.palette .end { margin-left: auto; }
.palette-body { padding-bottom: 19px; }
.palette h2 {
  display: flex;
  align-items: center;
  height: 26px;
  margin: 0;
  padding-left: 3px;
  gap: 4px;
  font-size: 11px;
}
.row {
  display: grid;
  grid-template-columns: 94px 16px;
  align-items: center;
  height: 26px;
  padding-left: 9px;
  white-space: nowrap;
}
.off { color: #a6a6a6; }
.off svg { opacity: .5; }
.row input {
  appearance: none;
  display: grid;
  place-items: center;
  width: 14px;
  height: 14px;
  margin: 0;
  border: 1px solid #555;
  border-radius: 3px;
  background: linear-gradient(#d2d2d2, #efefef);
}
.row input:checked::before {
  content: "";
  width: 10px;
  height: 10px;
  background: #111;
  clip-path: polygon(0 55%, 20% 45%, 38% 70%, 85% 0, 100% 5%, 42% 100%);
}
.palette footer {
  display: flex;
  justify-content: flex-end;
  height: 36px;
  padding: 7px 16px 7px 0;
  border-top: 1px solid #a9a9a9;
  background: #d2d2d2;
}
.palette footer button {
  justify-content: center;
  width: 76px;
  border: 1px solid #b0b0b0;
  background: #ececec;
  color: #555;
}

/* bottom of the drawing area */
.lower { display: grid; grid-template-columns: 1fr auto 1fr; align-items: center; }
.navtools { display: flex; gap: 7px; }
.navset { display: flex; align-items: center; height: 24px; padding: 0 3px; background: #c9c9c9; }
.navset button { gap: 1px; }
.nav-a { gap: 10px; }
.nav-b { gap: 6px; }
.nav-c { gap: 12px; padding: 0 6px; }
.status {
  justify-self: end;
  width: 242px;
  margin: 0;
  color: #333;
  font-weight: bold;
  white-space: nowrap;
}

/* history */
.timeline {
  display: flex;
  align-items: flex-start;
  height: 50px;
  padding: 10px 9px 0 4px;
  background: #cbcbcb;
}
.transport { display: flex; padding-top: 7px; }
.transport button { width: 25px; justify-content: center; }
.track { margin-left: 11px; }
.settings { margin: 7px 0 0 auto; }
```
